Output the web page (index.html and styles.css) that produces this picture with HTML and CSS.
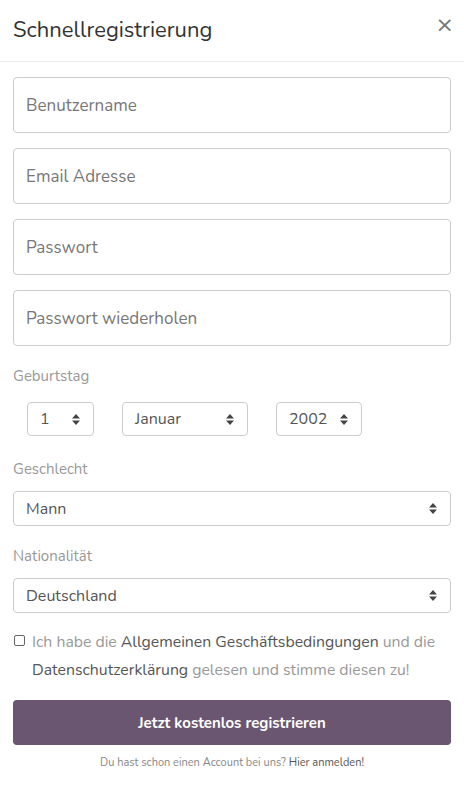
FILE: index.html
```html
<!DOCTYPE html>
<html lang="de">
<head>
<meta charset="utf-8">
<title>Schnellregistrierung</title>
<link rel="stylesheet" href="styles.css">
</head>
<body>
<div class="modal">
  <div class="modal-header">
    <h1 class="title">Schnellregistrierung</h1>
    <span class="close">&times;</span>
  </div>
  <div class="modal-body">
    <div class="inputs">
      <div class="input"><span class="ph">Benutzername</span></div>
      <div class="input"><span class="ph">Email Adresse</span></div>
      <div class="input"><span class="ph">Passwort</span></div>
      <div class="input"><span class="ph">Passwort wiederholen</span></div>
    </div>

    <div class="label label-birth">Geburtstag</div>
    <div class="birth-row">
      <div class="select sel-day"><span>1</span><svg class="arrows" width="8" height="11" viewBox="0 0 8 11"><path d="M4 0L8 4.5H0Z M4 11L8 6.5H0Z" fill="#444"/></svg></div>
      <div class="select sel-month"><span>Januar</span><svg class="arrows" width="8" height="11" viewBox="0 0 8 11"><path d="M4 0L8 4.5H0Z M4 11L8 6.5H0Z" fill="#444"/></svg></div>
      <div class="select sel-year"><span>2002</span><svg class="arrows" width="8" height="11" viewBox="0 0 8 11"><path d="M4 0L8 4.5H0Z M4 11L8 6.5H0Z" fill="#444"/></svg></div>
    </div>

    <div class="label label-gender">Geschlecht</div>
    <div class="select wide"><span>Mann</span><svg class="arrows" width="8" height="11" viewBox="0 0 8 11"><path d="M4 0L8 4.5H0Z M4 11L8 6.5H0Z" fill="#444"/></svg></div>

    <div class="label label-nat">Nationalität</div>
    <div class="select wide"><span>Deutschland</span><svg class="arrows" width="8" height="11" viewBox="0 0 8 11"><path d="M4 0L8 4.5H0Z M4 11L8 6.5H0Z" fill="#444"/></svg></div>

    <div class="terms">
      <span class="checkbox"></span>
      <p class="terms-text">Ich habe die <span class="link">Allgemeinen Geschäftsbedingungen</span> und die <span class="link">Datenschutzerklärung</span> gelesen und stimme diesen zu!</p>
    </div>

    <button class="btn">Jetzt kostenlos registrieren</button>

    <p class="footer">Du hast schon einen Account bei uns? <span class="footer-link">Hier anmelden!</span></p>
  </div>
</div>
</body>
</html>
```

FILE: styles.css
```css
* { box-sizing: border-box; }
html, body {
  margin: 0;
  padding: 0;
  background: #fff;
}
body {
  font-family: "Nunito", "Lato", "Noto Sans", sans-serif;
  color: #555;
}
.modal {
  width: 464px;
}
.modal-header {
  height: 62px;
  border-bottom: 1px solid #e9e9e9;
  display: flex;
  align-items: flex-start;
  justify-content: space-between;
  padding: 0 13px;
}
.title {
  margin: 15px 0 0 0;
  font-size: 22px;
  font-weight: 400;
  color: #333;
  line-height: 30px;
}
.close {
  margin-top: 12px;
  margin-right: -3px;
  font-size: 22px;
  line-height: 26px;
  color: #777;
  font-family: "DejaVu Sans", sans-serif;
}
.modal-body {
  padding: 15px 13px 0 13px;
  display: flex;
  flex-direction: column;
}
.inputs {
  display: flex;
  flex-direction: column;
  gap: 15px;
}
.input {
  height: 56px;
  border: 1px solid #ccc;
  border-radius: 4px;
  display: flex;
  align-items: center;
  padding-left: 12px;
}
.ph {
  font-size: 17px;
  color: #777;
}
.label {
  font-size: 15px;
  line-height: 20px;
  color: #999;
}
.label-birth { margin-top: 20px; }
.label-gender { margin-top: 23px; }
.label-nat { margin-top: 20px; }
.birth-row {
  display: flex;
  gap: 28px;
  margin-top: 16px;
  padding-left: 14px;
}
.select {
  border: 1px solid #ccc;
  border-radius: 4px;
  display: flex;
  align-items: center;
  justify-content: space-between;
  font-size: 16px;
  color: #555;
  padding: 0 13px 0 12px;
}
.sel-day { width: 67px; height: 34px; }
.sel-month { width: 126px; height: 34px; }
.sel-year { width: 86px; height: 34px; }
.wide {
  height: 35px;
  margin-top: 12px;
}
.label-nat + .wide { margin-top: 12px; }
.arrows { flex: none; }
.terms {
  display: flex;
  align-items: flex-start;
  margin-top: 15px;
}
.checkbox {
  flex: none;
  width: 11px;
  height: 11px;
  border: 1px solid #666;
  border-radius: 2px;
  margin: 7px 7px 0 1px;
}
.terms-text {
  margin: 0;
  font-size: 15.8px;
  line-height: 28px;
  color: #999;
}
.link {
  color: #555;
}
.btn {
  margin-top: 16px;
  height: 45px;
  width: 100%;
  border: none;
  border-radius: 4px;
  background: #6a5670;
  color: #fff;
  font-family: "Nunito", "Lato", "Noto Sans", sans-serif;
  font-size: 15px;
  font-weight: 700;
}
.footer {
  margin: 11px 0 0 0;
  text-align: center;
  font-size: 11px;
  line-height: 14px;
  color: #888;
}
.footer-link {
  color: #555;
}
```
